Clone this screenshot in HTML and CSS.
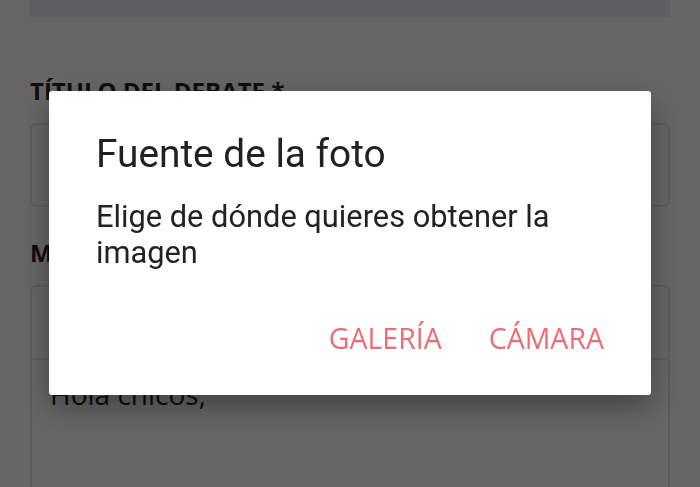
FILE: index.html
```html
<!DOCTYPE html>
<html>
<head>
    <meta charset="UTF-8">
    <meta name="viewport" content="width=device-width, initial-scale=1.0">
    <title>Nuevo debate</title>
    <link rel="stylesheet" href="styles.css">
</head>
<body>
    <div class="page">
        <div class="topbar"></div>
        <label class="field-label">TÍTULO DEL DEBATE *</label>
        <div class="input"></div>
        <label class="field-label second">MENSAJE *</label>
        <div class="editor">
            <div class="editor-toolbar"></div>
            <div class="editor-body">Hola chicos,</div>
        </div>
    </div>

    <div class="overlay"></div>

    <div class="dialog">
        <h2 class="dialog-title">Fuente de la foto</h2>
        <p class="dialog-text">Elige de dónde quieres obtener la imagen</p>
        <div class="dialog-actions">
            <button class="action">GALERÍA</button>
            <button class="action">CÁMARA</button>
        </div>
    </div>
</body>
</html>
```

FILE: styles.css
```css
body {
    margin: 0;
    height: 487px;
    overflow: hidden;
    background-color: #fff;
    font-family: "Open Sans", sans-serif;
}
.page {
    padding: 0 30px;
}
.topbar {
    height: 17px;
    margin-left: -1px;
    background-color: #e6edf5;
}
.field-label {
    display: block;
    margin-top: 60px;
    font-size: 24px;
    font-weight: 700;
    color: #222;
    line-height: 28px;
}
.field-label.second {
    margin-top: 32px;
}
.input {
    margin-top: 18px;
    height: 80px;
    border: 2px solid #e4e4e4;
    border-radius: 6px;
}
.editor {
    margin-top: 18px;
    height: 200px;
    border: 2px solid #e4e4e4;
    border-bottom: none;
    border-radius: 6px 6px 0 0;
}
.editor-toolbar {
    height: 71px;
    border-bottom: 2px solid #e4e4e4;
}
.editor-body {
    padding: 15px 18px 0;
    font-size: 28px;
    color: #222;
}
.overlay {
    position: fixed;
    inset: 0;
    background: rgba(0, 0, 0, 0.6);
}

.dialog {
    position: fixed;
    left: 49px;
    top: 91px;
    width: 602px;
    height: 304px;
    box-sizing: border-box;
    padding: 40px 47px 0;
    background: #fff;
    border-radius: 3px;
    box-shadow: 0 12px 30px rgba(0, 0, 0, 0.35);
}
.dialog-title {
    margin: 0;
    font-family: Roboto, sans-serif;
    font-weight: 400;
    font-size: 38.8px;
    line-height: 46px;
    color: #212121;
}
.dialog-text {
    margin: 22px 0 0;
    font-family: Roboto, sans-serif;
    font-size: 30.8px;
    line-height: 36px;
    color: #222;
}
.dialog-actions {
    display: flex;
    justify-content: flex-end;
    gap: 47px;
    margin-top: 48px;
}
.action {
    padding: 0;
    border: none;
    background: none;
    font-family: "Open Sans", sans-serif;
    font-size: 28.5px;
    color: #f06b74;
    cursor: pointer;
}
```
